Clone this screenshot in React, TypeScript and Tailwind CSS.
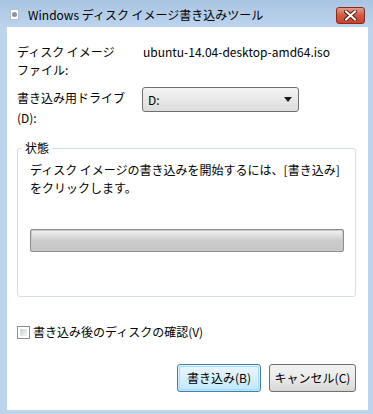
import React from "react";

const font = { fontFamily: '"Noto Sans CJK JP", "Noto Sans", sans-serif' };

const App: React.FC = () => {
  return (
    <div
      className="w-[373px] h-[414px] flex flex-col bg-[#bed4ec] text-[12px] text-black"
      style={font}
    >
      {/* title bar */}
      <div className="h-[27px] flex items-start bg-gradient-to-b from-[#a9c4e3] to-[#bcd3ec]">
        <div className="ml-[10px] mt-[9px] w-[9px] h-[11px] bg-white border border-[#b8c2cc] flex items-center justify-center">
          <div className="w-[5px] h-[5px] rounded-full bg-[#8a949e]" />
        </div>
        <div className="ml-[9px] mt-[5px] leading-[20px] text-[12px] text-black">
          Windows ディスク イメージ書き込みツール
        </div>
        <div className="ml-auto mr-[8px] mt-[7px] w-[29px] h-[17px] rounded-[3px] border border-[#8a2a1c] bg-gradient-to-b from-[#e19a8c] via-[#cf5a44] to-[#c8412b] flex items-center justify-center">
          <svg width="13" height="11" viewBox="0 0 13 11">
            <path
              d="M2 1.5 L11 9.5 M11 1.5 L2 9.5"
              stroke="#5a1a10"
              strokeWidth="4"
              strokeLinecap="square"
            />
            <path
              d="M2 1.5 L11 9.5 M11 1.5 L2 9.5"
              stroke="#ffffff"
              strokeWidth="2"
              strokeLinecap="square"
            />
          </svg>
        </div>
      </div>

      {/* client area */}
      <div className="ml-[7px] mr-[5px] mb-[4px] flex-1 bg-white flex flex-col pl-[10px] pr-[12px] pt-[16px]">
        <div className="grid grid-cols-[126px_1fr] leading-[18px]">
          <div>
            <div>ディスク イメージ</div>
            <div>ファイル:</div>
          </div>
          <div>ubuntu-14.04-desktop-amd64.iso</div>
        </div>

        <div className="mt-[9px] grid grid-cols-[125px_1fr] leading-[20px]">
          <div>
            <div>書き込み用ドライブ</div>
            <div>(D):</div>
          </div>
          <div className="-mt-[1px] w-[157px] h-[25px] rounded-[3px] border border-[#707070] bg-gradient-to-b from-[#f4f4f4] to-[#dcdcdc] flex items-center justify-between pl-[5px] pr-[6px]">
            <span>D:</span>
            <svg width="8" height="5" viewBox="0 0 8 5">
              <path d="M0 0 H8 L4 5 Z" fill="#1a1a1a" />
            </svg>
          </div>
        </div>

        {/* group box */}
        <div className="relative mt-[20px] w-[339px] border border-[#d5dee4] rounded-[3px] pl-[12px] pt-[12px] pb-[44px]">
          <span className="absolute left-[4px] -top-[10px] px-[3px] leading-[18px] bg-white">
            状態
          </span>
          <div className="leading-[18px] whitespace-nowrap">
            <div>ディスク イメージの書き込みを開始するには、[書き込み]</div>
            <div>をクリックします。</div>
          </div>
          <div className="mt-[32px] w-[314px] h-[23px] rounded-[2px] border border-[#8d8d8d] bg-[#cacaca] p-[1px]">
            <div className="h-full w-full rounded-[1px] bg-gradient-to-b from-[#f0f0f0] via-[#cccccc] to-[#c6c6c6]" />
          </div>
        </div>

        <div className="mt-[26px] flex items-center leading-[18px]">
          <div className="w-[13px] h-[13px] border border-[#8e8f8f] bg-white p-[2px]">
            <div className="w-full h-full bg-gradient-to-br from-[#cbcfd5] to-[#f6f6f6]" />
          </div>
          <span className="ml-[3px]">書き込み後のディスクの確認(V)</span>
        </div>

        <div className="mt-[23px] flex justify-end gap-[8px]">
          <div className="w-[84px] h-[28px] rounded-[3px] border border-[#3c7fb1] bg-gradient-to-b from-[#eaf6fd] via-[#d9f0fc] to-[#bee6fd] flex items-center justify-center">
            <div className="w-[80px] h-[24px] rounded-[2px] border border-[#a7d9f5] flex items-center justify-center">
              書き込み(B)
            </div>
          </div>
          <div className="w-[87px] h-[28px] rounded-[3px] border border-[#707070] bg-gradient-to-b from-[#f2f2f2] via-[#ebebeb] to-[#d6d6d6] flex items-center justify-center">
            キャンセル(C)
          </div>
        </div>
      </div>
    </div>
  );
};

export default App;
